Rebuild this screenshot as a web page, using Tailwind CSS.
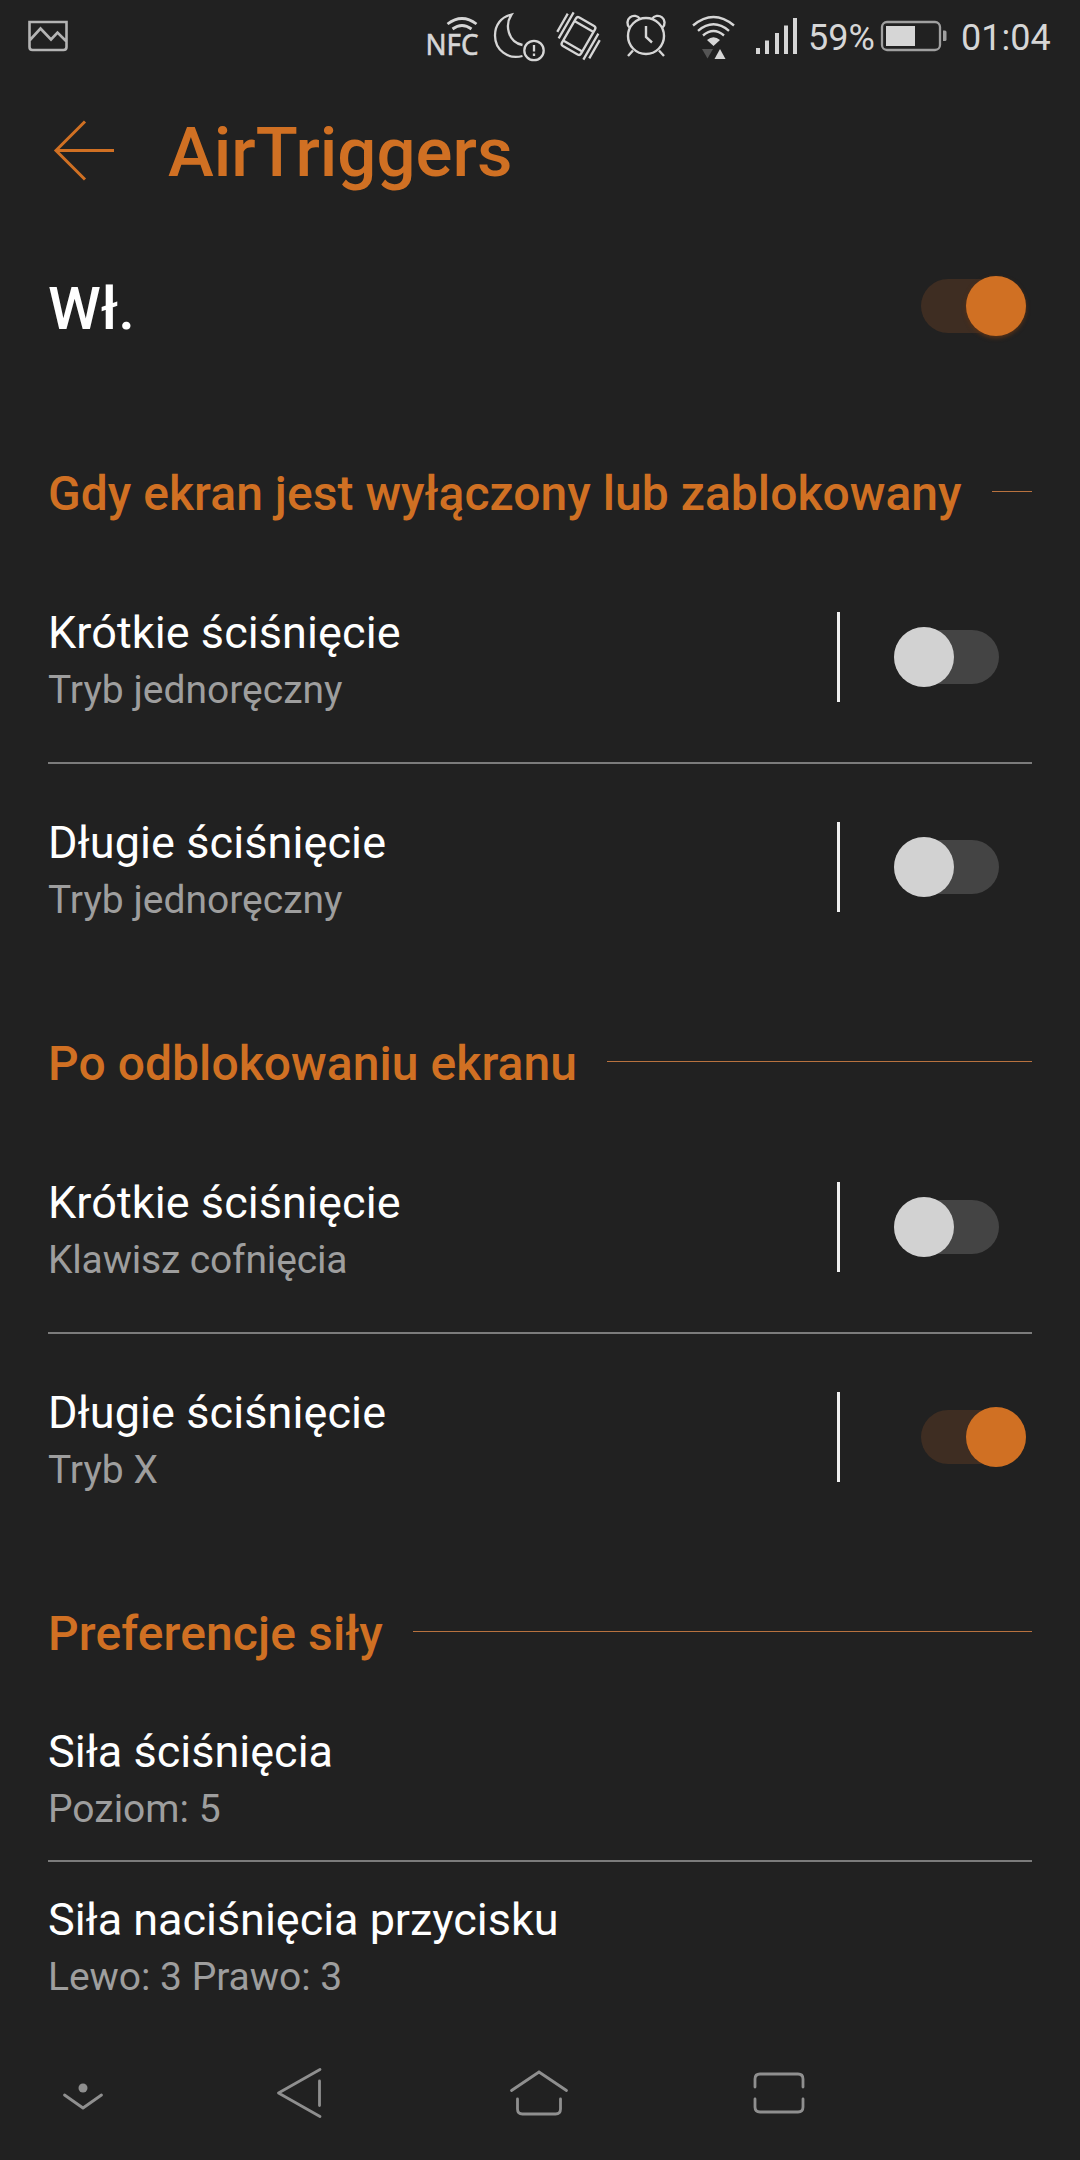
<!DOCTYPE html>
<html lang="pl">
<head>
    <meta charset="UTF-8">
    <meta name="viewport" content="width=device-width, initial-scale=1.0">
    <title>AirTriggers</title>
    <script src="https://cdn.jsdelivr.net/npm/@tailwindcss/browser@4"></script>
</head>
<body class="bg-[#212121]">
<div class="flex flex-col w-[1080px] h-[2160px] overflow-hidden bg-[#212121] text-white font-['Roboto',sans-serif]">

  <!-- Status bar -->
  <div class="flex h-[74px] shrink-0 text-[#d6d6d6]">
    <svg class="w-[80px] h-[74px]" viewBox="0 0 80 74" fill="none" stroke="#b4b4b4" stroke-width="2.6">
      <path d="M29.5 22h37v25q0 3-3 3h-31q-3 0-3-3z M30 40l10.5-11.5L51 39.500l6.500-7L66 41" />
    </svg>
    <div class="flex-1"></div>
    <!-- NFC -->
    <svg class="w-[61px] h-[74px]" viewBox="424 0 61 74" fill="none" stroke="currentColor" stroke-width="2.800">
      <text x="425.500" y="54.500" class="font-['Noto_Sans',sans-serif] text-[29px]" fill="currentColor" stroke="currentColor" stroke-width="0.6" textLength="53" lengthAdjust="spacingAndGlyphs">NFC</text>
      <path d="M447.500 24q14.500-11 29 0M452.500 29q9.500-7 19 0" />
    </svg>
    <!-- Do not disturb -->
    <svg class="w-[65px] h-[74px]" viewBox="485 0 65 74" fill="none" stroke="currentColor" stroke-width="2.300">
      <path d="M522.500 56C508 60 495 50 495 35.500C495 25 501 17 511.500 14.500C504.500 25 508 42 522.500 45" />
      <circle cx="534" cy="50.500" r="9.700" />
      <path d="M534 45v6.500M534 53.500v2.500" />
    </svg>
    <!-- Vibration -->
    <svg class="w-[65px] h-[74px]" viewBox="550 0 65 74" fill="none" stroke="currentColor" stroke-width="2.300">
      <g transform="rotate(30 578.500 36)">
        <rect x="567.500" y="19.500" width="22" height="33" rx="2.500" />
        <path d="M567.500 25h22M567.500 47.500h22M562.500 18v30M558 22v21M594.500 24v30M599 29v21" />
      </g>
    </svg>
    <!-- Alarm -->
    <svg class="w-[70px] h-[74px]" viewBox="615 0 70 74" fill="none" stroke="currentColor" stroke-width="2.400">
      <circle cx="646" cy="36" r="18" />
      <path d="M646 26v11l6 5.500M629.500 27.500A6.800 6.800 0 1 1 640 19M662.500 27.500A6.800 6.800 0 1 0 652 19M633 50.500l-5 5.500M659 50.500l5 5.500" />
    </svg>
    <!-- Wi-Fi -->
    <svg class="w-[65px] h-[74px]" viewBox="685 0 65 74" fill="none" stroke="currentColor" stroke-width="2.400">
      <path d="M693 25.500q20.500-17 41 0M698 30.800q15.500-13 31 0M703 35.500q10.500-9 21 0" />
      <path d="M707 40q6.500-5.500 13 0l-6.500 6z" fill="currentColor" stroke="none" />
      <path d="M702 49h11l-5.500 9.500z" fill="#555" stroke="none" />
      <path d="M714.500 59h11l-5.500-10z" fill="currentColor" stroke="none" />
    </svg>
    <!-- Signal -->
    <svg class="w-[58px] h-[74px]" viewBox="750 0 58 74" fill="currentColor">
      <path d="M756 48h4v6h-4zM765 40.500h4V54h-4zM775 33h4v21h-4zM784 25.500h4V54h-4zM793 18h4v36h-4z" />
    </svg>
    <span class="w-[67px] text-[36px] leading-[77px] whitespace-nowrap">59%</span>
    <!-- Battery -->
    <svg class="w-[86px] h-[74px]" viewBox="875 0 86 74">
      <rect x="882" y="22" width="58" height="28" rx="5" fill="none" stroke="#a0a0a0" stroke-width="2.300" />
      <path d="M943 30.500h2q1.500 0 1.500 1.500v7.500q0 1.500-1.500 1.500h-2z" fill="#a0a0a0" />
      <rect x="886" y="26" width="29" height="20" fill="currentColor" />
    </svg>
    <span class="w-[119px] text-[36px] leading-[77px]">01:04</span>
  </div>

  <!-- Header -->
  <div class="flex h-[153px] shrink-0 items-center pl-[52px]">
    <svg class="w-[64px] h-[64px]" viewBox="0 1.500 64 64" fill="none" stroke="#d07023" stroke-width="3">
      <path d="M33 4L4 33l29 29M4 33h58" />
    </svg>
    <h1 class="pt-[5px] pl-[52px] text-[69px] leading-[80px] font-medium text-[#d07023]">AirTriggers</h1>
  </div>

  <!-- Main switch -->
  <div class="flex h-[158px] shrink-0 items-center justify-between pl-12 pr-[54px]">
    <span class="pt-[5px] text-[60px] leading-[80px] font-medium">Wł.</span>
    <div class="flex w-[105px] h-[54px] items-center justify-end rounded-full bg-[#3e2d22]">
      <div class="size-[60px] shrink-0 rounded-full bg-[#d07023] shadow-[0_2px_4px_#5a3216]"></div>
    </div>
  </div>

  <!-- Screen off -->
  <div class="flex h-[168px] shrink-0 items-center gap-[30px] px-12 pt-[50px]">
    <h2 class="text-[48px] leading-[60px] font-medium tracking-[0.03px] whitespace-nowrap text-[#d07023]">Gdy ekran jest wyłączony lub zablokowany</h2>
    <div class="h-px flex-1 -mt-[5px] bg-[#b8723f]"></div>
  </div>
  <div class="mx-12 flex h-[211px] shrink-0 items-center border-b-2 border-[#7c7c7c] pb-[2px]">
    <div class="w-[789px] pt-[10px]">
      <p class="text-[45px] leading-[57px] tracking-[0.08px]">Krótkie ściśnięcie</p>
      <p class="text-[39px] leading-[59px] text-[#9e9e9e]">Tryb jednoręczny</p>
    </div>
    <div class="w-[3px] h-[90px] bg-[#f0f0f0]"></div>
    <div class="ml-[54px] flex w-[105px] h-[54px] items-center rounded-full bg-[#444]">
      <div class="size-[60px] shrink-0 rounded-full bg-[#d2d2d2]"></div>
    </div>
  </div>
  <div class="mx-12 flex h-[207px] shrink-0 items-center pb-[2px]">
    <div class="w-[789px] pt-[10px]">
      <p class="text-[45px] leading-[57px] tracking-[0.08px]">Długie ściśnięcie</p>
      <p class="text-[39px] leading-[59px] text-[#9e9e9e]">Tryb jednoręczny</p>
    </div>
    <div class="w-[3px] h-[90px] bg-[#f0f0f0]"></div>
    <div class="ml-[54px] flex w-[105px] h-[54px] items-center rounded-full bg-[#444]">
      <div class="size-[60px] shrink-0 rounded-full bg-[#d2d2d2]"></div>
    </div>
  </div>

  <!-- Screen unlocked -->
  <div class="flex h-[152px] shrink-0 items-center gap-[30px] px-12 pt-[34px]">
    <h2 class="text-[48px] leading-[60px] font-medium tracking-[0.06px] whitespace-nowrap text-[#d07023]">Po odblokowaniu ekranu</h2>
    <div class="h-px flex-1 -mt-[5px] bg-[#b8723f]"></div>
  </div>
  <div class="mx-12 flex h-[211px] shrink-0 items-center border-b-2 border-[#7c7c7c] pb-[2px]">
    <div class="w-[789px] pt-[10px]">
      <p class="text-[45px] leading-[57px] tracking-[0.08px]">Krótkie ściśnięcie</p>
      <p class="text-[39px] leading-[59px] tracking-[-0.17px] text-[#9e9e9e]">Klawisz cofnięcia</p>
    </div>
    <div class="w-[3px] h-[90px] bg-[#f0f0f0]"></div>
    <div class="ml-[54px] flex w-[105px] h-[54px] items-center rounded-full bg-[#444]">
      <div class="size-[60px] shrink-0 rounded-full bg-[#d2d2d2]"></div>
    </div>
  </div>
  <div class="mx-12 flex h-[207px] shrink-0 items-center pb-[2px]">
    <div class="w-[789px] pt-[10px]">
      <p class="text-[45px] leading-[57px] tracking-[0.08px]">Długie ściśnięcie</p>
      <p class="text-[39px] leading-[59px] text-[#9e9e9e]">Tryb X</p>
    </div>
    <div class="w-[3px] h-[90px] bg-[#f0f0f0]"></div>
    <div class="ml-[81px] flex w-[105px] h-[54px] items-center justify-end rounded-full bg-[#3e2d22]">
      <div class="size-[60px] shrink-0 rounded-full bg-[#d07023]"></div>
    </div>
  </div>

  <!-- Force -->
  <div class="flex h-[152px] shrink-0 items-center gap-[30px] px-12 pt-[34px]">
    <h2 class="text-[48px] leading-[60px] font-medium tracking-[0.12px] whitespace-nowrap text-[#d07023]">Preferencje siły</h2>
    <div class="h-px flex-1 -mt-[5px] bg-[#b8723f]"></div>
  </div>
  <div class="mx-12 h-[169px] shrink-0 border-b-2 border-[#7c7c7c] pt-[30px]">
    <p class="text-[45px] leading-[57px]">Siła ściśnięcia</p>
    <p class="text-[39px] leading-[59px] text-[#9e9e9e]">Poziom: 5</p>
  </div>
  <div class="mx-12 h-[168px] shrink-0 pt-[29px]">
    <p class="text-[45px] leading-[57px] tracking-[-0.04px]">Siła naciśnięcia przycisku</p>
    <p class="text-[39px] leading-[59px] tracking-[-0.04px] text-[#9e9e9e]">Lewo: 3 Prawo: 3</p>
  </div>

  <!-- Navigation bar -->
  <div class="flex h-[130px] shrink-0 gap-[164px] pl-[46px]">
    <svg class="w-[60px] h-[130px]" viewBox="46 2030 60 130" fill="none" stroke="#8f8f8f" stroke-width="2.800" stroke-linecap="round">
      <circle cx="83" cy="2088" r="4.500" fill="#8f8f8f" stroke="none" />
      <path d="M64.500 2095L83 2108l18.500-13" stroke-linejoin="round" />
    </svg>
    <svg class="w-[60px] h-[130px]" viewBox="270 2030 60 130" fill="none" stroke="#8f8f8f" stroke-width="2.800" stroke-linecap="round" stroke-linejoin="round">
      <path d="M320 2069.500L278.500 2093l41.500 23.500M319.500 2081v24.500" />
    </svg>
    <svg class="w-[70px] h-[130px]" viewBox="494 2030 70 130" overflow="visible" fill="none" stroke="#8f8f8f" stroke-width="2.800" stroke-linecap="round">
      <path d="M511.500 2090.500L539 2072l27.500 18.500M517.500 2099v10q0 5 5 5h33q5 0 5-5v-10" />
    </svg>
    <svg class="w-[60px] h-[130px]" viewBox="728 2030 60 130" overflow="visible" fill="none" stroke="#8f8f8f" stroke-width="2.800" stroke-linecap="round">
      <path d="M755 2087v-8q0-5 5-5h38q5 0 5 5v8M755 2099v8q0 5 5 5h38q5 0 5-5v-8" />
    </svg>
  </div>
</div>
</body>
</html>
